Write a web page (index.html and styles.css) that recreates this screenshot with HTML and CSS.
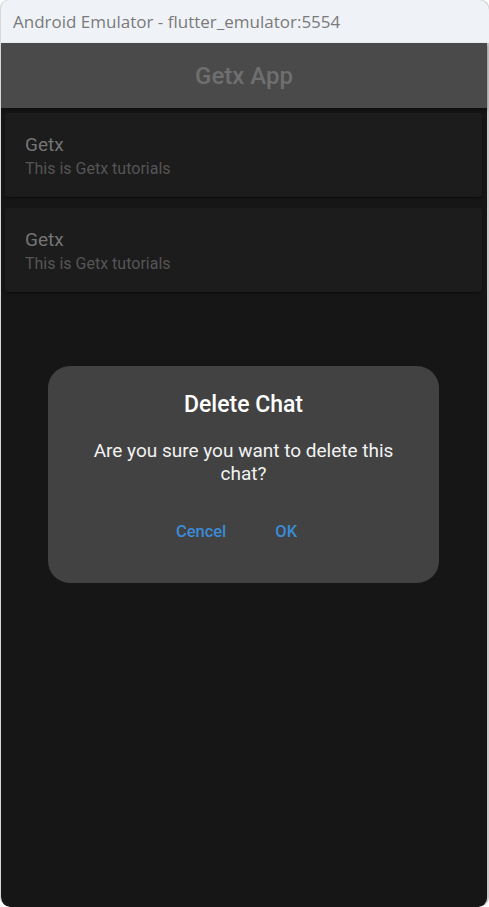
FILE: index.html
```html
<!DOCTYPE html>
<html>
<head>
<meta charset="utf-8">
<link rel="stylesheet" href="styles.css">
</head>
<body>
<div class="window">
  <div class="titlebar">Android Emulator - flutter_emulator:5554</div>
  <div class="screen">
    <div class="appbar">Getx App</div>
    <div class="list">
      <div class="card">
        <div class="card-title">Getx</div>
        <div class="card-sub">This is Getx tutorials</div>
      </div>
      <div class="card">
        <div class="card-title">Getx</div>
        <div class="card-sub">This is Getx tutorials</div>
      </div>
    </div>
    <div class="dialog">
      <div class="dialog-title">Delete Chat</div>
      <div class="dialog-body">Are you sure you want to delete this chat?</div>
      <div class="dialog-actions">
        <span class="btn">Cencel</span>
        <span class="btn">OK</span>
      </div>
    </div>
  </div>
</div>
</body>
</html>
```
FILE: styles.css
```css
html, body {
  margin: 0;
  padding: 0;
  background: #ffffff;
}
body {
  width: 489px;
  height: 907px;
  overflow: hidden;
  font-family: Roboto, "Noto Sans", sans-serif;
}
.window {
  height: 907px;
  display: flex;
  flex-direction: column;
  background: #c9c9c9;
  border-radius: 8px 8px 10px 10px;
  overflow: hidden;
  box-sizing: border-box;
  border-left: 1px solid #d8d8d8;
}
.titlebar {
  height: 43px;
  flex: none;
  background: #eff3f8;
  color: #7a7a7a;
  font-family: "Open Sans", "Noto Sans", sans-serif;
  font-size: 17px;
  line-height: 44px;
  padding-left: 12px;
  border-top-left-radius: 8px;
  border-top-right-radius: 10px;
}
.screen {
  position: relative;
  flex: 1;
  margin-right: 2px;
  background: #161616;
  border-radius: 0 0 9px 9px;
}
.appbar {
  height: 65px;
  background: #4a4a4a;
  color: #6f6f6f;
  font-size: 24px;
  font-weight: 500;
  display: flex;
  align-items: center;
  justify-content: center;
  box-shadow: 0 2px 3px rgba(0,0,0,0.4);
}
.list {
  display: flex;
  flex-direction: column;
  gap: 11px;
  padding: 5px 5px 0 4px;
}
.card {
  height: 84px;
  background: #1c1c1c;
  border-radius: 3px;
  box-sizing: border-box;
  padding: 21px 0 0 20px;
  box-shadow: 0 1px 2px rgba(0,0,0,0.5);
}
.card-title {
  color: #747474;
  font-size: 19px;
  line-height: 22px;
}
.card-sub {
  color: #555555;
  font-size: 16px;
  line-height: 20px;
  margin-top: 3px;
}
.dialog {
  position: absolute;
  left: 47px;
  top: 323px;
  width: 391px;
  height: 217px;
  background: #424242;
  border-radius: 22px;
  box-sizing: border-box;
  padding: 24px 30px 0;
  text-align: center;
  color: #ffffff;
}
.dialog-title {
  font-size: 23px;
  font-weight: 500;
  line-height: 30px;
}
.dialog-body {
  margin-top: 19px;
  font-size: 19px;
  line-height: 23px;
  color: #f2f2f2;
}
.dialog-actions {
  margin-top: 37px;
  display: flex;
  justify-content: center;
  gap: 49px;
  padding-right: 14px;
}
.btn {
  color: #3b8bd6;
  font-size: 16.5px;
  font-weight: 500;
  line-height: 20px;
}
```
